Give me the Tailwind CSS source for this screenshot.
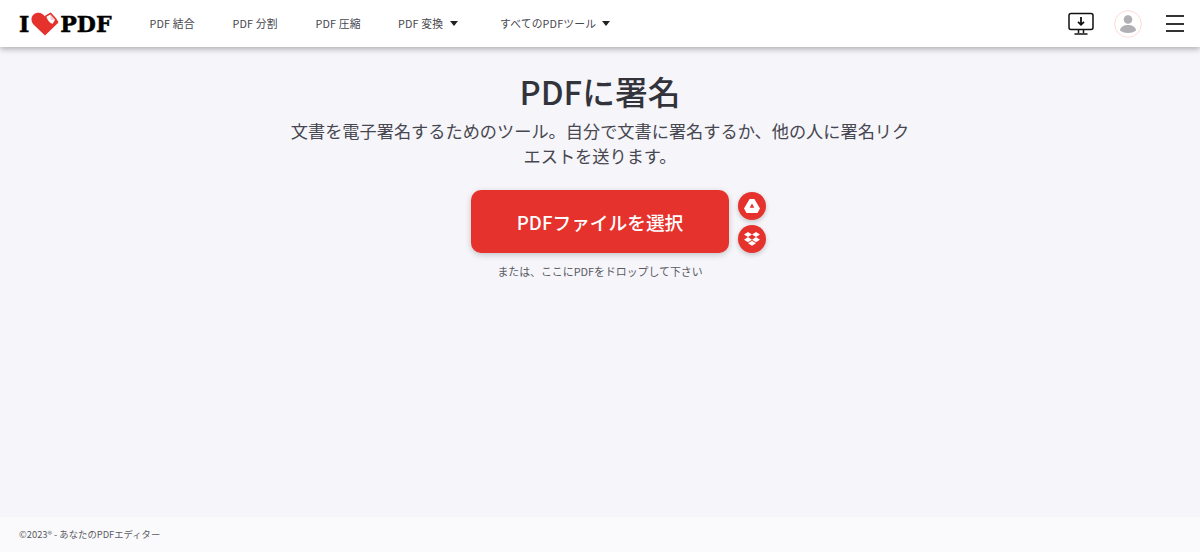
<!DOCTYPE html>
<html lang="ja">
<head>
    <meta charset="UTF-8">
    <meta name="viewport" content="width=device-width, initial-scale=1.0">
    <title>PDFに署名</title>
    <script src="https://cdn.jsdelivr.net/npm/@tailwindcss/browser@4"></script>
</head>

<body class="flex flex-col h-[552px] overflow-hidden bg-[#f5f5fa] text-[#47474f] font-['Noto_Sans_CJK_JP','Noto_Sans',sans-serif]">
    <!-- header -->
    <header class="relative z-10 flex items-center h-[47px] bg-white shadow-[0_2px_6px_rgba(0,0,0,0.3)]">
        <a href="#" class="flex items-center ml-[19px] w-[130.500px] shrink-0 text-black font-['DejaVu_Serif',serif] font-bold text-[22px] leading-none [-webkit-text-stroke:0.5px_black]">
            <span>I</span>
            <svg class="w-[28px] h-[24px] ml-[2px]" viewBox="0 0 29 25">
                <path d="M14.500 24.500 L2.500 13 C-1.500 8.500 .5 1.500 7 .8 C10 .5 12.500 2 14 4.500 L20.500 .8 L25.500 8 C28 8.500 29.500 10 27.500 12 Z" fill="#e5322d"/>
                <path d="M14.500 4.200 L20.500 .5 L27 7.500 L23 14 C19 14.500 15.500 9 14.500 4.200 Z" fill="#e5322d"/>
                <path d="M16 5 L20 2.500 L25 8 L22.500 12.300 C19.500 11.800 17 8.500 16 5 Z" fill="#fff"/>
                <path d="M20 2.500 L25 8 L20.500 8.300 Z" fill="#f6c9c7"/>
            </svg>
            <span class="ml-[1px]">PDF</span>
        </a>
        <nav class="flex items-center text-[10.800px] tracking-[0.15px] text-[#47474f]">
            <a href="#" class="w-[83px]">PDF 結合</a>
            <a href="#" class="w-[83px]">PDF 分割</a>
            <a href="#" class="w-[82.500px]">PDF 圧縮</a>
            <a href="#" class="flex items-center gap-[7px] w-[102px]">PDF 変換
                <span class="w-0 h-0 border-x-[4px] border-x-transparent border-t-[5px] border-t-[#222]"></span>
            </a>
            <a href="#" class="flex items-center gap-[6px]">すべてのPDFツール
                <span class="w-0 h-0 border-x-[4px] border-x-transparent border-t-[5px] border-t-[#222]"></span>
            </a>
        </nav>
        <div class="flex items-center ml-auto mr-[16px]">
            <svg class="w-[26px] h-[24px]" viewBox="0 0 26 24" fill="none" stroke="#111" stroke-width="1.500">
                <rect x="1" y="1.500" width="24" height="16" rx="2"/>
                <path d="M13 5v7.500M10 9.800l3 3 3-3" stroke-width="1.800"/>
                <path d="M10.500 18v3M15.500 18v3M6.500 22h13"/>
            </svg>
            <svg class="w-[28px] h-[28px] ml-[20px]" viewBox="0 0 28 28">
                <circle cx="14" cy="14" r="13.300" fill="#fff" stroke="#fbdcd6" stroke-width="1"/>
                <circle cx="14" cy="9.500" r="4.300" fill="#b0b0b5"/>
                <path d="M6 20.500c0-3.500 4-5.500 8-5.500s8 2 8 5.500c-2 1.700-5 2.500-8 2.500s-6-.8-8-2.500z" fill="#b0b0b5"/>
            </svg>
            <div class="flex flex-col gap-[5.500px] w-[18px] ml-[24px]">
                <span class="h-[2px] bg-[#333]"></span>
                <span class="h-[2px] bg-[#333]"></span>
                <span class="h-[2px] bg-[#333]"></span>
            </div>
        </div>
    </header>

    <!-- main -->
    <main class="flex-1 flex flex-col items-center pt-[19px]">
        <h1 class="text-[32.800px] leading-[50px] font-medium text-[#33333b]">PDFに署名</h1>
        <p class="w-[630px] mt-[2px] text-center text-[17.200px] leading-[25px] text-[#47474f]">文書を電子署名するためのツール。自分で文書に署名するか、他の人に署名リクエストを送ります。</p>
        <div class="relative mt-[22px]">
            <button class="w-[258px] h-[63px] pt-[1px] rounded-[10px] bg-[#e5322d] text-white text-[18.700px] font-medium shadow-[0_2px_6px_rgba(0,0,0,0.2)]">PDFファイルを選択</button>
            <div class="absolute left-[267px] top-[2px] flex flex-col gap-[5px]">
                <a href="#" class="flex items-center justify-center w-[28px] h-[28px] rounded-full bg-[#e5322d] shadow-[0_2px_5px_rgba(0,0,0,0.2)]">
                    <svg class="w-[16px] h-[14px]" viewBox="0 0 16 14">
                        <path fill-rule="evenodd" d="M5.600 0h4.800L16 9.500 13.500 14h-11L0 9.500 5.600 0zM8 4.500L5.700 8.700h4.600L8 4.500z" fill="#fff"/>
                    </svg>
                </a>
                <a href="#" class="flex items-center justify-center w-[28px] h-[28px] rounded-full bg-[#e5322d] shadow-[0_2px_5px_rgba(0,0,0,0.2)]">
                    <svg class="w-[16px] h-[15px]" viewBox="0 0 16 15" fill="#fff">
                        <path d="M4 0L0 2.600l4 2.500 4-2.500zM12 0L8 2.600l4 2.500 4-2.500zM0 7.700l4 2.600 4-2.600-4-2.600zM12 5.100L8 7.700l4 2.600 4-2.600zM4 11.200L8 13.800l4-2.600-4-2.500z"/>
                    </svg>
                </a>
            </div>
        </div>
        <p class="mt-[10px] text-[10.900px] leading-[16px] text-[#5a5a62]">または、ここにPDFをドロップして下さい</p>
    </main>

    <!-- footer -->
    <footer class="flex items-center h-[35px] pl-[19px] bg-[#fafafc] text-[9.350px] text-[#5a5a62]">©2023® - あなたのPDFエディター</footer>
</body>
</html>
